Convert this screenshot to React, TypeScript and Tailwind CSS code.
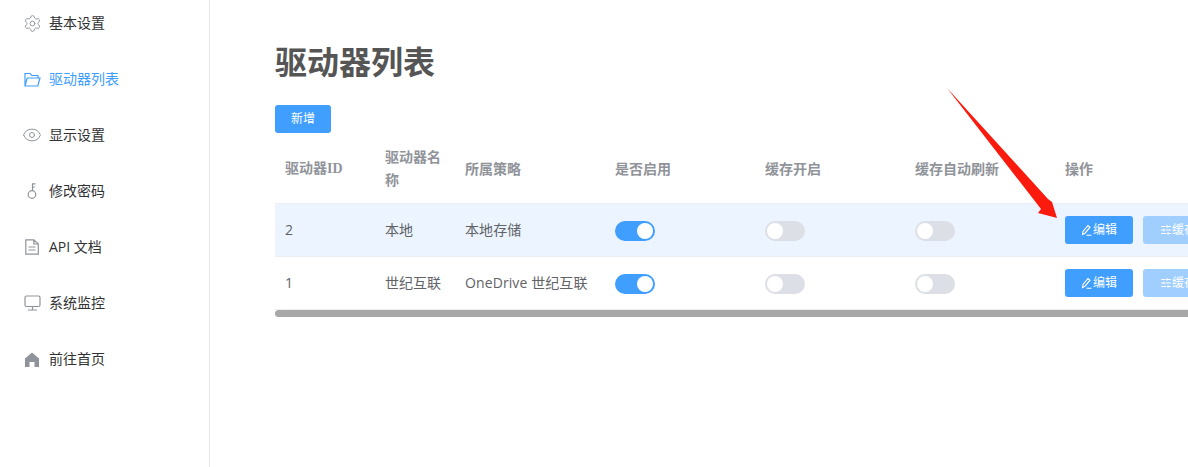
import { Eye, Settings, SlidersHorizontal } from 'lucide-react'
import type { ReactNode } from 'react'

function FolderIcon() {
  return (
    <svg className="shrink-0" width="17" height="15" viewBox="0 0 17 15" fill="none" stroke="currentColor" strokeWidth="1.2">
      <path d="M1 14V1.500h5.200l1.500 2h6.300v2.500M1 14h12.800L16 6H3.200z" />
    </svg>
  )
}

function KeyIcon() {
  return (
    <svg className="shrink-0" width="16" height="16" viewBox="0 0 16 16" fill="none" stroke="currentColor" strokeWidth="1.200">
      <circle cx="8" cy="11.500" r="3.800" />
      <path d="M8.500 7.700V.8h3M8.500 4h2.400" />
    </svg>
  )
}

function DocIcon() {
  return (
    <svg className="shrink-0" width="16" height="16" viewBox="0 0 16 16" fill="none" stroke="currentColor" strokeWidth="1.200">
      <path d="M1.800.8h8L14.300 5v10.200H1.800zM9.800.8V5h4.500M4.500 8h7M4.500 11h7" />
    </svg>
  )
}

function MonitorIcon() {
  return (
    <svg className="shrink-0" width="17" height="16" viewBox="0 0 17 16" fill="none" stroke="currentColor" strokeWidth="1.200">
      <rect x="1" y="1" width="15" height="10.500" rx="1.500" />
      <path d="M8.500 11.500v3.500M4 15h9" />
    </svg>
  )
}

function HomeIcon() {
  return (
    <svg className="shrink-0" width="16" height="15" viewBox="0 0 16 15" fill="currentColor">
      <path d="M8 0.500 15 6.500V15H10.500V10H5.500V15H1V6.500z" />
    </svg>
  )
}

function PencilIcon() {
  return (
    <svg width="12" height="12" viewBox="0 0 12 12" fill="none" stroke="currentColor" strokeWidth="1.100">
      <path d="M1.500 10.500 2 7.500 7 1.500l2 1.700-5 6zM5.500 11.200h5" />
    </svg>
  )
}

const menu: { label: string; icon: ReactNode; active?: boolean }[] = [
  { label: '基本设置', icon: <Settings className="shrink-0" size={19} strokeWidth={1.2} /> },
  { label: '驱动器列表', icon: <FolderIcon />, active: true },
  { label: '显示设置', icon: <Eye className="shrink-0" size={20} strokeWidth={1.2} /> },
  { label: '修改密码', icon: <KeyIcon /> },
  { label: 'API 文档', icon: <DocIcon /> },
  { label: '系统监控', icon: <MonitorIcon /> },
  { label: '前往首页', icon: <HomeIcon /> },
]

const rows = [
  { id: 2, name: '本地', policy: '本地存储', highlight: true },
  { id: 1, name: '世纪互联', policy: 'OneDrive 世纪互联', highlight: false },
]

function Toggle({ on }: { on: boolean }) {
  return (
    <span
      className={`mt-px flex h-5 w-10 items-center rounded-full p-0.5 ${
        on ? 'justify-end bg-[#409eff]' : 'justify-start bg-[#dcdfe6]'
      }`}
    >
      <span className="size-4 rounded-full bg-white" />
    </span>
  )
}

function Cell({ className, children }: { className?: string; children: ReactNode }) {
  return <td className={`px-2.5 leading-[23px] ${className ?? 'py-3'}`}>{children}</td>
}

export default function App() {
  return (
    <div className="relative flex h-screen overflow-hidden bg-white font-['Open_Sans','Noto_Sans_CJK_SC',sans-serif] text-sm">
      <aside className="-mt-[5px] w-[210px] shrink-0 border-r border-[#e6e6e6] pl-6">
        {menu.map((item) => (
          <div
            key={item.label}
            className={`flex h-14 items-center ${item.active ? 'text-[#409eff]' : 'text-[#303133]'}`}
          >
            <span
              className={`mr-[9px] flex w-4 justify-center ${item.active ? 'text-[#409eff]' : 'text-[#909399]'}`}
            >
              {item.icon}
            </span>
            {item.label}
          </div>
        ))}
      </aside>

      <main className="min-w-0 flex-1 pt-[39px] pl-[65px]">
        <h1 className="mb-[21px] text-[32px] leading-[45px] font-bold text-[#555555]">驱动器列表</h1>
        <button className="h-7 w-14 rounded-[3px] bg-[#409eff] text-xs text-white">新增</button>

        <div className="overflow-hidden">
          <table className="w-[1000px] table-fixed border-collapse text-[#606266]">
            <thead>
              <tr className="border-b border-[#ebeef5] text-left font-bold text-[#909399]">
                <th className="w-[100px] px-2.5 py-3 font-['Liberation_Serif','Noto_Sans_CJK_SC',serif] leading-[23px]">
                  驱动器ID
                </th>
                <th className="w-20 px-2.5 py-3 leading-[23px]">驱动器名称</th>
                <th className="w-[150px] px-2.5 py-3 leading-[23px]">所属策略</th>
                <th className="w-[150px] px-2.5 py-3 leading-[23px]">是否启用</th>
                <th className="w-[150px] px-2.5 py-3 leading-[23px]">缓存开启</th>
                <th className="w-[150px] px-2.5 py-3 leading-[23px]">缓存自动刷新</th>
                <th className="px-2.5 py-3 leading-[23px]">操作</th>
              </tr>
            </thead>
            <tbody>
              {rows.map((row) => (
                <tr key={row.id} className={`border-b border-[#ebeef5] ${row.highlight ? 'bg-[#ecf5ff]' : ''}`}>
                  <Cell className="pt-[11px] pb-[13px]">{row.id}</Cell>
                  <Cell className="pt-[11px] pb-[13px]">{row.name}</Cell>
                  <Cell className="pt-[11px] pb-[13px] whitespace-nowrap tracking-[0.1px]">{row.policy}</Cell>
                  <Cell>
                    <Toggle on />
                  </Cell>
                  <Cell>
                    <Toggle on={false} />
                  </Cell>
                  <Cell>
                    <Toggle on={false} />
                  </Cell>
                  <Cell className="py-3 whitespace-nowrap">
                    <div className="flex gap-2.5">
                      <button className="flex h-7 w-[68px] items-center justify-center rounded-[3px] bg-[#409eff] text-xs text-white">
                        <PencilIcon />
                        编辑
                      </button>
                      <button className="flex h-7 w-[92px] items-center rounded-[3px] bg-[#a0cfff] pl-[17px] text-xs text-white">
                        <SlidersHorizontal size={12} />
                        缓存刷新
                      </button>
                    </div>
                  </Cell>
                </tr>
              ))}
            </tbody>
          </table>
        </div>
        <div className="h-[7px] rounded-l-[4px] bg-[#a8a8a8]" />
      </main>

      <svg className="absolute top-0 left-0" width="1188" height="467" fill="#fb1a0e">
        <polygon points="947,88 1048,199 1052,202 1057,218 1038,213 1041,209" />
      </svg>
    </div>
  )
}
